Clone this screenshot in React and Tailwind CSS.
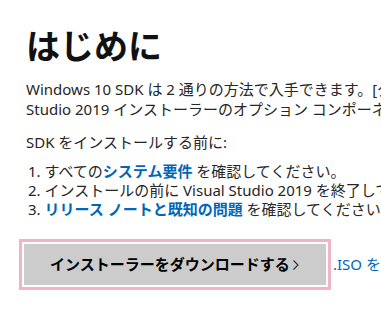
export default function App() {
  const font = { fontFamily: '"Noto Sans", "Noto Sans CJK JP", sans-serif' };
  return (
    <div
      className="w-[381px] h-[321px] overflow-hidden bg-white text-[#262626] [font-family:'Noto_Sans','Noto_Sans_CJK_JP',sans-serif]"
    >
      <div className="pl-[26px] pt-[25px] whitespace-nowrap">
        <h1 className="text-[34px] leading-[40px] font-bold text-[#111] [font-family:'Noto_Sans_CJK_JP',sans-serif]">
          はじめに
        </h1>
        <p className="mt-[14px] text-[15px] leading-[20px]">
          Windows 10 SDK は 2 通りの方法で入手できます。[ダウンロード] から入手するか、Visual
          <br />
          Studio 2019 インストーラーのオプション コンポーネントとして入手します。
        </p>
        <p className="mt-[13px] text-[15px] leading-[20px]">SDK をインストールする前に:</p>
        <div className="mt-[10px] pl-[2px] text-[15px] leading-[19px]">
          <div>
            1. すべての<span className="font-bold text-[#0067b8]">システム要件</span> を確認してください。
          </div>
          <div>2. インストールの前に Visual Studio 2019 を終了してください。</div>
          <div>
            3. <span className="font-bold text-[#0067b8]">リリース ノートと既知の問題</span> を確認してください。
          </div>
        </div>
      </div>
      <div className="mt-[25px] pl-[24px] flex items-center whitespace-nowrap">
        <button className="h-[41px] w-[302px] shrink-0 bg-[#cccccc] flex items-center justify-between pl-[26px] pr-[26px] text-[15px] font-semibold text-black outline-3 outline-[#f2b3c9] outline-offset-2 [font-family:'Noto_Sans','Noto_Sans_CJK_JP',sans-serif]">
          <span>インストーラーをダウンロードする</span>
          <svg width="8" height="12" viewBox="0 0 8 12" className="shrink-0">
            <path d="M1.5 1.5 L6 6 L1.5 10.5" fill="none" stroke="#333" strokeWidth="1.2" />
          </svg>
        </button>
        <span className="ml-[7px] text-[15px] text-[#0067b8]">.ISO をダウンロードする</span>
      </div>
    </div>
  );
}
